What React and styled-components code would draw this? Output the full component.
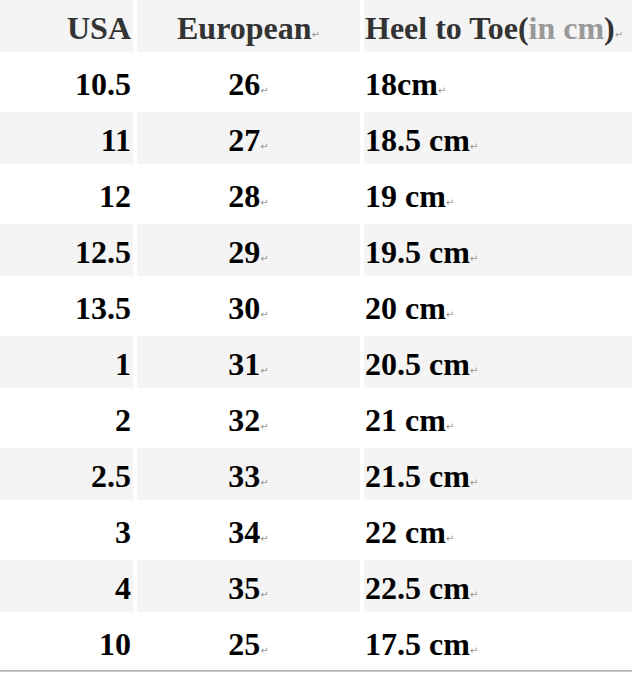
import React from 'react';
import styled, { createGlobalStyle } from 'styled-components';

const GlobalStyle = createGlobalStyle`
    body {
        margin: 0;
        background: #ffffff;
    }
`

const Page = styled.div`
    width: 632px;
    height: 677px;
    overflow: hidden;
    background: #fff;
`

const Grid = styled.div`
    display: grid;
    grid-template-columns: 133px 223px 268px;
    grid-auto-rows: 52px;
    column-gap: 4px;
    row-gap: 4px;
    font-family: "Liberation Serif", "Times New Roman", serif;
    font-weight: bold;
    font-size: 32px;
`

const Cell = styled.div`
    display: flex;
    align-items: center;
    justify-content: ${p => p.align === 'right' ? 'flex-end' : p.align === 'center' ? 'center' : 'flex-start'};
    padding: ${p => p.align === 'right' ? '0 2px 0 0' : p.align === 'center' ? '0' : '0 0 0 1px'};
    padding-top: 5px;
    background: ${p => p.shaded ? '#f4f4f4' : '#ffffff'};
    color: ${p => p.head ? '#333333' : '#000000'};
    white-space: nowrap;
`

const Muted = styled.span`
    color: #999999;
`

const Mark = styled.span`
    font-family: "DejaVu Sans", sans-serif;
    font-weight: normal;
    font-size: 10px;
    color: #999999;
    align-self: center;
    margin-top: 12px;
`

const BottomLine = styled.div`
    margin-top: 2px;
    height: 1px;
    border-top: 1px solid #b0b0b0;
    background: #c8c8c8;
`

const rows = [
    ['10.5', '26', '18cm'],
    ['11', '27', '18.5 cm'],
    ['12', '28', '19 cm'],
    ['12.5', '29', '19.5 cm'],
    ['13.5', '30', '20 cm'],
    ['1', '31', '20.5 cm'],
    ['2', '32', '21 cm'],
    ['2.5', '33', '21.5 cm'],
    ['3', '34', '22 cm'],
    ['4', '35', '22.5 cm'],
    ['10', '25', '17.5 cm'],
]

const App = () => {
    return (
        <Page>
            <GlobalStyle />
            <Grid>
                <Cell head shaded align="right">USA</Cell>
                <Cell head shaded align="center">European<Mark>↵</Mark></Cell>
                <Cell head shaded>Heel to Toe(<Muted>in cm</Muted>)<Mark>↵</Mark></Cell>
                {rows.map((r, i) => (
                    <React.Fragment key={i}>
                        <Cell shaded={i % 2 === 1} align="right">{r[0]}</Cell>
                        <Cell shaded={i % 2 === 1} align="center">{r[1]}<Mark>↵</Mark></Cell>
                        <Cell shaded={i % 2 === 1}>{r[2]}<Mark>↵</Mark></Cell>
                    </React.Fragment>
                ))}
            </Grid>
            <BottomLine />
        </Page>
    );
}

export default App;
